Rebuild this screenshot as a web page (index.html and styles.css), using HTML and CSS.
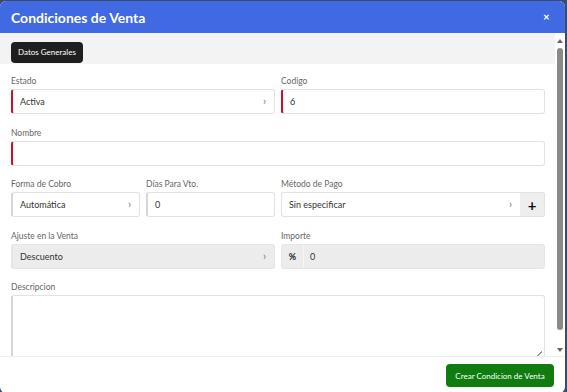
FILE: index.html
```html
<!DOCTYPE html>
<html lang="es">
<head>
<meta charset="utf-8">
<link rel="stylesheet" href="styles.css">
</head>
<body>
<div class="modal">
  <header class="modal-header">
    <h1 class="modal-title">Condiciones de Venta</h1>
    <span class="close">&#x2715;</span>
  </header>
  <div class="modal-body">
    <div class="scroll-content">
      <div class="tabs">
        <button class="tab active">Datos Generales</button>
      </div>
      <form class="form">
        <div class="field span2">
          <label class="lbl">Estado</label>
          <div class="ctrl required select"><span class="val">Activa</span><span class="chev">&#x203A;</span></div>
        </div>
        <div class="field span2">
          <label class="lbl">Codigo</label>
          <div class="ctrl required"><span class="val">6</span></div>
        </div>
        <div class="field span4">
          <label class="lbl">Nombre</label>
          <div class="ctrl required"></div>
        </div>
        <div class="field">
          <label class="lbl">Forma de Cobro</label>
          <div class="ctrl thick select"><span class="val">Automática</span><span class="chev">&#x203A;</span></div>
        </div>
        <div class="field">
          <label class="lbl">Días Para Vto.</label>
          <div class="ctrl thick"><span class="val">0</span></div>
        </div>
        <div class="field span2">
          <label class="lbl">Método de Pago</label>
          <div class="group">
            <div class="ctrl select grow"><span class="val">Sin especificar</span><span class="chev">&#x203A;</span></div>
            <span class="addon-btn">+</span>
          </div>
        </div>
        <div class="field span2">
          <label class="lbl">Ajuste en la Venta</label>
          <div class="ctrl thick select disabled"><span class="val">Descuento</span><span class="chev">&#x203A;</span></div>
        </div>
        <div class="field span2">
          <label class="lbl">Importe</label>
          <div class="ctrl disabled group-in"><span class="pct">%</span><span class="val">0</span></div>
        </div>
        <div class="field span4">
          <label class="lbl">Descripcion</label>
          <div class="ctrl thick textarea"><span class="grip"></span></div>
        </div>
      </form>
    </div>
    <div class="scrollbar">
      <span class="arrow up"></span>
      <span class="thumb"></span>
      <span class="arrow down"></span>
    </div>
  </div>
  <footer class="modal-footer">
    <button class="btn-primary">Crear Condicion de Venta</button>
  </footer>
</div>
</body>
</html>
```
FILE: styles.css
```css
* { box-sizing: border-box; }
html, body { margin: 0; height: 100%; }
body {
  background: #3d4a6e;
  font-family: Lato, "Open Sans", sans-serif;
  overflow: hidden;
}
.modal {
  width: 565px;
  height: 392px;
  margin-top: 1px;
  background: #fff;
  border-radius: 6px;
  display: flex;
  flex-direction: column;
  overflow: hidden;
}
.modal-header {
  height: 32px;
  flex: none;
  background: #4169e1;
  display: flex;
  align-items: center;
  justify-content: space-between;
  padding: 0 15px 0 11px;
}
.modal-title {
  margin: 0;
  color: #fff;
  font-size: 14px;
  font-weight: 700;
}
.close {
  color: #fff;
  font-size: 8px;
  font-weight: 700;
}
.modal-body {
  flex: 1;
  display: flex;
  min-height: 0;
  border-bottom: 1px solid #eee;
}
.scroll-content {
  flex: 1;
  overflow: hidden;
}
.tabs {
  background: #f3f3f3;
  height: 31px;
  padding: 6px 11px;
}
.tab {
  height: 21px;
  padding: 0 7px;
  border: none;
  border-radius: 4px;
  background: #1f1f1f;
  color: #fff;
  font-family: Lato, sans-serif;
  font-size: 8px;
}
.form {
  display: grid;
  grid-template-columns: repeat(4, 1fr);
  column-gap: 6px;
  row-gap: 12.5px;
  padding: 11px 10px 0 11px;
}
.field { display: flex; flex-direction: column; min-width: 0; }
.span2 { grid-column: span 2; }
.span4 { grid-column: span 4; }
.lbl {
  font-size: 8.5px;
  color: #666;
  height: 12px;
  line-height: 12px;
  margin-bottom: 2px;
}
.ctrl {
  height: 25px;
  border: 1px solid #e2e2e2;
  border-radius: 3px;
  display: flex;
  align-items: center;
  padding: 0 8px 0 7px;
  font-size: 9px;
  color: #333;
  background: #fff;
}
.ctrl.required { border-left: 2px solid #c8102e; }
.ctrl.thick { border-left: 2px solid #d6d6d6; }
.ctrl.disabled { background: #ececec; border-color: #e6e6e6; }
.ctrl.select { justify-content: space-between; }
.chev { color: #777; font-size: 11px; line-height: 1; margin-top: -2px; }
.group { display: flex; }
.grow { flex: 1; border-radius: 3px 0 0 3px; border-right: none; }
.addon-btn {
  width: 25px;
  height: 25px;
  background: #eeeeee;
  border: 1px solid #e2e2e2;
  border-left: none;
  border-radius: 0 3px 3px 0;
  display: flex;
  align-items: center;
  justify-content: center;
  font-size: 15px;
  font-weight: 700;
  color: #111;
}
.group-in { padding-left: 0; }
.pct {
  width: 22px;
  align-self: stretch;
  display: flex;
  align-items: center;
  justify-content: center;
  font-weight: 700;
  color: #222;
  border-right: 1px solid #f6f6f6;
  margin-right: 6px;
}
.textarea { height: 64px; flex: none; position: relative; }
.grip {
  position: absolute;
  right: 2px;
  bottom: 2px;
  width: 5px;
  height: 5px;
  background: linear-gradient(135deg, transparent 45%, #999 45%, #999 60%, transparent 60%);
}
.scrollbar {
  width: 10px;
  flex: none;
  display: flex;
  flex-direction: column;
  align-items: center;
  padding: 6px 0 4px;
  background: #fff;
}
.arrow {
  width: 0; height: 0;
  border-left: 3px solid transparent;
  border-right: 3px solid transparent;
}
.arrow.up { border-bottom: 4px solid #666; }
.arrow.down { border-top: 4px solid #666; margin-top: auto; }
.thumb {
  width: 6px;
  height: 282px;
  margin-top: 5px;
  background: #8a8a8a;
  border-radius: 3px;
}
.modal-footer {
  height: 36px;
  flex: none;
  display: flex;
  justify-content: flex-end;
  align-items: flex-start;
  padding: 7px 11px 0 0;
}
.btn-primary {
  height: 23px;
  width: 108px;
  border: none;
  border-radius: 4px;
  background: #107c10;
  color: #fff;
  font-family: Lato, sans-serif;
  font-size: 8px;
  padding: 0;
  white-space: nowrap;
}
```
